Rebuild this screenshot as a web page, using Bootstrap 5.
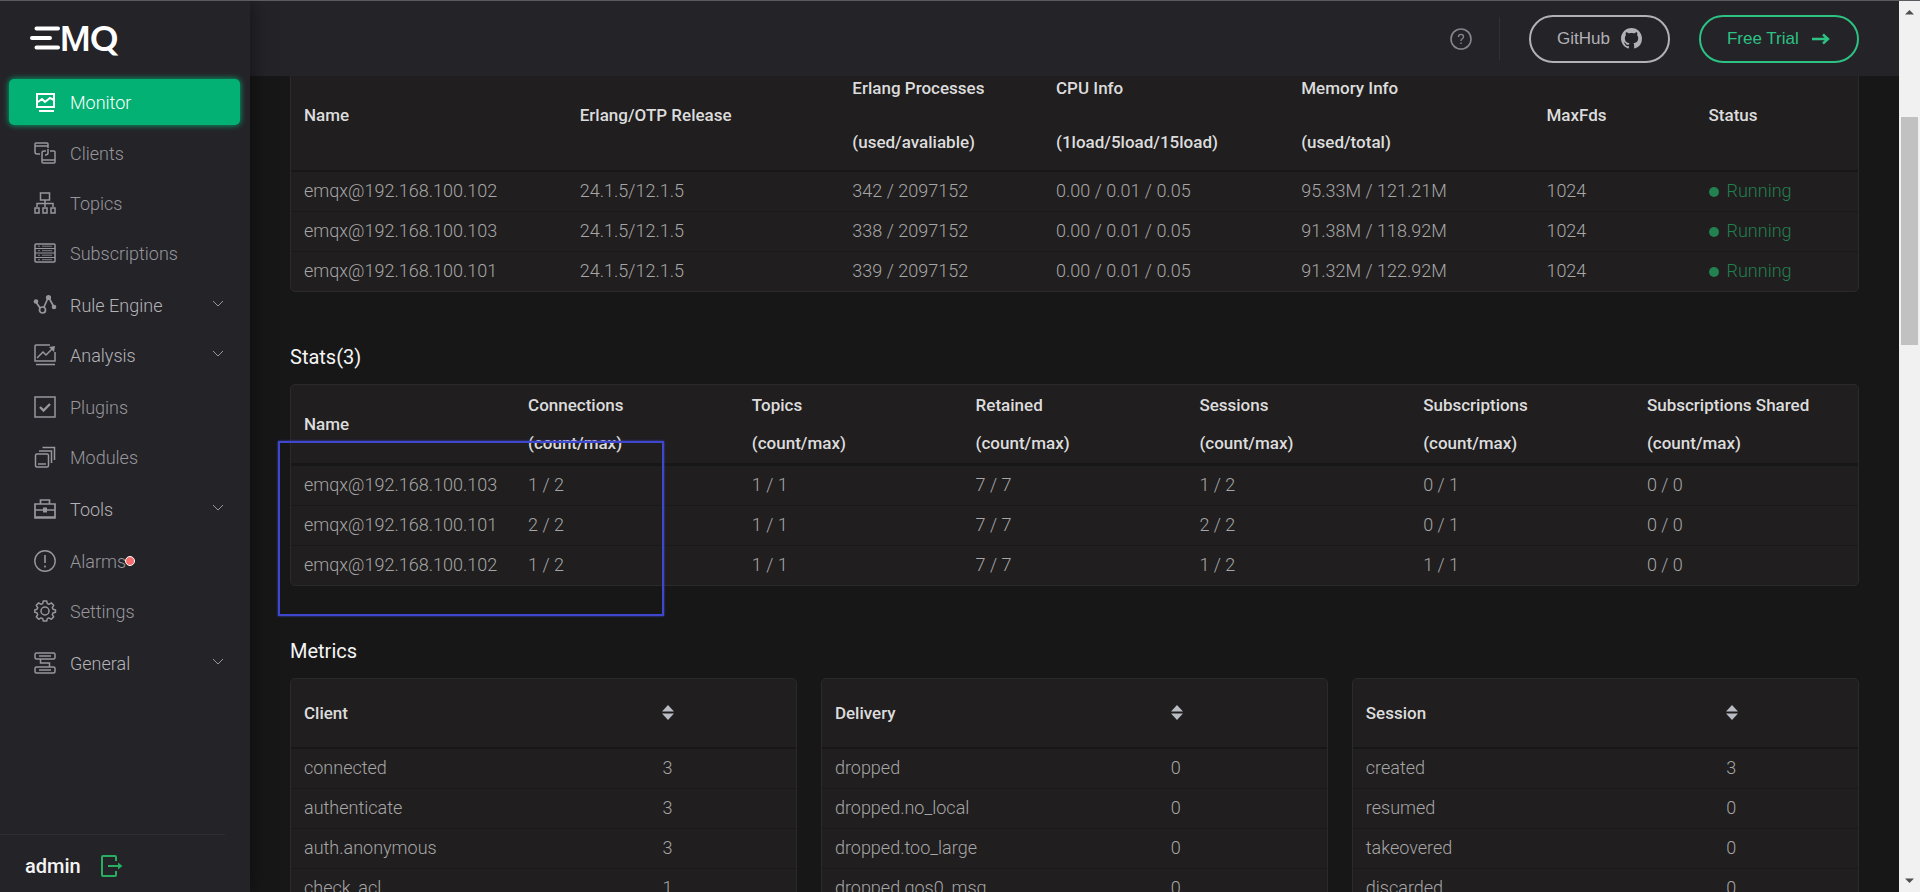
<!DOCTYPE html>
<html lang="en">
<head>
<meta charset="utf-8">
<meta name="viewport" content="width=device-width, initial-scale=1">
<title>EMQ Dashboard - Monitor</title>
<link rel="stylesheet" href="https://cdn.jsdelivr.net/npm/bootstrap@5.3.0/dist/css/bootstrap.min.css">
<style>
  :root {
    --panel: #242328;
    --page: #171717;
    --box: #201e1f;
    --line: #2a2a2b;
    --green: #02b173;
  }
  body {
    background: var(--page);
    color: #a6a6a6;
    font-family: Roboto, "Liberation Sans", sans-serif;
    font-size: 18px;
    font-weight: 300;
    border-top: 1px solid #5b5b60;
  }
  svg { fill: none; stroke: currentColor; flex: none; overflow: visible; }

  /* sidebar */
  .side { flex: none; width: 250px; background: var(--panel); box-shadow: 0 0 20px rgba(0, 0, 0, .5); z-index: 5; }
  .brand { height: 75px; padding: 19px 30px; color: #fff; }
  .brand text { fill: #fff; stroke: none; font-size: 35px; }
  .menu ul { margin: 0 0 2px; padding: 0; list-style: none; }
  .menu a { height: 50px; padding: 0 26px 0 34px; gap: 14px; color: #97979c; text-decoration: none; }
  .menu a.parent { color: #b4b4b8; }
  .menu a.parent svg { color: #97979c; }
  .menu a.current {
    height: 46px; margin: 3px 10px 3px 9px; padding-left: 25px;
    background: var(--green); color: #fff; border-radius: 5px; box-shadow: 0 0 6px var(--green);
  }
  .alarm-dot { width: 10px; height: 10px; margin-left: -15px; border-radius: 50%; background: #f56c6c; border: 1px solid #fff; }
  .account { height: 58px; margin-right: 25px; padding: 4px 0 0 25px; gap: 20px; border-top: 1px solid #2f2e33; }
  .account strong { color: #f4f4f4; font-size: 20px; font-weight: 500; }
  .account button { color: #27ae60; }

  /* top bar */
  .topbar { height: 75px; background: var(--panel); padding: 0 40px; z-index: 3; }
  .help { color: #85858c; }
  .divider { width: 1px; height: 43px; margin: 0 29px 0 27px; background: #313036; }
  .pill {
    height: 48px; border: 2px solid; border-radius: 24px; padding: 0 26px;
    font: 17px "Liberation Sans", Arial, sans-serif; text-decoration: none;
  }
  .pill-grey { color: #b1b1b6; gap: 11px; }
  .pill-green { color: #2dc183; gap: 12px; margin-left: 29px; padding-right: 27px; }

  /* content */
  .content { padding: 58px 40px 0; }
  h2 { margin: 53px 0 15px; font-size: 20px; line-height: 24px; font-weight: 400; color: #f5f5f5; }
  .box { background: var(--box); border: 1px solid var(--line); border-radius: 5px; }
  .grid-table { margin: 0; table-layout: fixed; border-collapse: separate; border-spacing: 0; --bs-table-bg: transparent; white-space: nowrap; }
  .grid-table > thead > tr > th { padding: 1px 13px; color: #dcdcdc; font-size: 17px; font-weight: 500; vertical-align: middle; border-bottom: 2px solid var(--page); }
  .grid-table > tbody > tr > td { padding: 0 13px; height: 40px; line-height: 37px; vertical-align: top; color: #a6a6a6; border-bottom: 1px solid #191919; }
  .grid-table > tbody > tr:last-child > td { height: 39px; border-bottom: 0; }
  .nodes th { line-height: 54px; }
  .stats > thead > tr > th { line-height: 38px; border-bottom-width: 3px; }
  .metric th { height: 70px; line-height: 24px; }
  .grid-table > tbody > tr > td.running { color: #23804f; }
  .dot { display: inline-block; width: 10px; height: 10px; margin-right: 8px; border-radius: 50%; background: #23804f; }
  .grid-table > thead > tr > th.sort { color: #b9bcc4; line-height: 0; padding-bottom: 3px; }
  .marker { left: -13px; top: 56px; width: 386px; height: 175px; border: 2px solid #3f48cc; box-shadow: 0 0 2px #3f48cc; pointer-events: none; }

  /* scroll rail */
  .rail { flex: none; width: 21px; background: #f1f1f1; padding: 8px 2px; color: #505050; }
  .thumb { height: 228px; margin-top: 102px; background: #c1c1c1; }
</style>
</head>
<body class="vh-100 overflow-hidden d-flex">

<aside class="side d-flex flex-column">
  <a class="brand d-block" href="#" aria-label="EMQ">
    <svg width="90" height="35" viewBox="0 0 90 35" stroke-width="4" stroke-linecap="round">
      <path d="M6.500 8.500H28M2 18H20M6.500 27.500H28"/>
      <text x="30" y="31" font-family="Roboto" font-weight="500">M</text>
      <text x="60" y="31" font-family="Lato" font-weight="700">Q</text>
    </svg>
  </a>

  <nav class="menu flex-grow-1">
    <ul>
      <li><a class="current d-flex align-items-center" href="#">
        <svg width="22" height="22" viewBox="0 0 22 22" stroke-width="2"><path d="M3 3h17v13H3zM5 20h15M4 11l4-3 3 3 5-4 4 2"/></svg>Monitor</a></li>
      <li><a class="d-flex align-items-center" href="#">
        <svg width="22" height="22" viewBox="0 0 22 22" stroke-width="1.500"><path d="M6 12H3q-2 0-2-2V2q0-1 1-1h11q1 0 1 1v4M1 4h13M16 9h4q1 0 1 1v10q0 1-1 1H9q-1 0-1-1V11q0-2 2-2h2M8 18h13M14 7v4q0 2-3 2"/></svg>Clients</a></li>
      <li><a class="d-flex align-items-center" href="#">
        <svg width="22" height="22" viewBox="0 0 22 22" stroke-width="1.500"><path d="M6.500 1h9v7h-9zM11 8v7M3 15v-3.500h16V15M1 16h4v5H1zM9 16h4v5H9zM17 16h4v5h-4z"/></svg>Topics</a></li>
      <li><a class="d-flex align-items-center" href="#">
        <svg width="22" height="22" viewBox="0 0 22 22" stroke-width="1.500"><rect x="1" y="2" width="20" height="18" rx="1"/><path d="M1 6.500h20M1 11h20M1 15.500h20" stroke-width="1.200"/><path d="M4 4.200h2m2 0h10M4 8.700h2m2 0h10M4 13.200h2m2 0h10M4 17.700h2m2 0h10" stroke-width=".8"/></svg>Subscriptions</a></li>
    </ul>
    <ul>
      <li><a class="parent d-flex align-items-center" href="#">
        <svg width="22" height="22" viewBox="0 0 22 22" stroke-width="1.700"><path d="M2 8l4 6M10 13l4-9M15 4l5 9"/><circle cx="8.500" cy="16" r="3"/><g fill="currentColor" stroke="none"><circle cx="2" cy="7.500" r="2.300"/><circle cx="14.500" cy="3.500" r="2.600"/><circle cx="20" cy="13" r="2.300"/></g></svg>Rule Engine
        <svg class="ms-auto" width="12" height="8" viewBox="0 0 12 8"><path d="M1 0l5 5 5-5"/></svg></a></li>
      <li><a class="parent d-flex align-items-center" href="#">
        <svg width="22" height="22" viewBox="0 0 22 22" stroke-width="1.500"><path d="M16 1H2q-1 0-1 1v15h20V8M2 20.500h19M3 14l6-6 3 3 7-7"/><path d="M15 3l6-1-1 6z" fill="currentColor" stroke="none"/></svg>Analysis
        <svg class="ms-auto" width="12" height="8" viewBox="0 0 12 8"><path d="M1 0l5 5 5-5"/></svg></a></li>
    </ul>
    <ul>
      <li><a class="d-flex align-items-center" href="#">
        <svg width="22" height="22" viewBox="0 0 22 22" stroke-width="1.500"><path d="M1 1h20v20H1z"/><path d="M6 11l3.500 3.500L16 8" stroke-width="2.400"/></svg>Plugins</a></li>
      <li><a class="d-flex align-items-center" href="#">
        <svg width="22" height="22" viewBox="0 0 22 22" stroke-width="1.500"><rect x="1.500" y="8" width="13" height="13" rx="1.500"/><path d="M5 5h12.500v12M8.500 1.500h12V14M4 18h8"/></svg>Modules</a></li>
    </ul>
    <ul>
      <li><a class="parent d-flex align-items-center" href="#">
        <svg width="22" height="22" viewBox="0 0 22 22" stroke-width="1.700"><path d="M1 6h20v14H1zM6.500 6V2h9v4M1 12h8m4 0h8M1 19h20"/><path d="M9 9.500h4v5H9z" fill="currentColor" stroke="none"/></svg>Tools
        <svg class="ms-auto" width="12" height="8" viewBox="0 0 12 8"><path d="M1 0l5 5 5-5"/></svg></a></li>
    </ul>
    <ul>
      <li><a class="d-flex align-items-center" href="#">
        <svg width="22" height="22" viewBox="0 0 22 22" stroke-width="1.400"><circle cx="11" cy="11" r="10.200"/><path d="M11 5v8M11 15.500v2" stroke-width="1.600"/></svg>Alarms<span class="alarm-dot"></span></a></li>
      <li><a class="d-flex align-items-center" href="#">
        <svg width="22" height="22" viewBox="0 0 22 22" stroke-width="1.500" stroke-linejoin="round"><circle cx="11" cy="11" r="4"/><path d="M9.300 1h3.400l.6 2.600 1.700.7 2.300-1.400 2.400 2.400-1.400 2.300.7 1.700 2.500.6v2.400l-2.500.6-.7 1.700 1.400 2.300-2.400 2.400-2.300-1.400-1.700.7-.6 2.400H9.300l-.6-2.400-1.700-.7-2.300 1.400-2.400-2.400 1.400-2.300-.7-1.700L.800 12.300V9.900L3 9.300l.7-1.700-1.400-2.300 2.400-2.400L7 4.300l1.700-.7z"/></svg>Settings</a></li>
    </ul>
    <ul>
      <li><a class="parent d-flex align-items-center" href="#">
        <svg width="22" height="22" viewBox="0 0 22 22" stroke-width="1.500"><rect x="1" y="1" width="20" height="6" rx="1.500"/><rect x="1" y="15" width="20" height="6" rx="1.500"/><path d="M5 4h12M5 18h12M6.500 7v4h9v4"/></svg>General
        <svg class="ms-auto" width="12" height="8" viewBox="0 0 12 8"><path d="M1 0l5 5 5-5"/></svg></a></li>
    </ul>
  </nav>

  <div class="account d-flex align-items-center">
    <strong>admin</strong>
    <button type="button" class="btn p-0 border-0 d-flex" aria-label="Log out">
      <svg width="22" height="22" viewBox="0 0 22 22" stroke-width="2"><path d="M15 6V2q0-1-1-1H2q-1 0-1 1v18q0 1 1 1h12q1 0 1-1v-4M7 11h12"/><path d="M17 7.500l4.500 3.500-4.500 3.500z" fill="currentColor" stroke="none"/></svg>
    </button>
  </div>
</aside>

<div class="flex-grow-1 position-relative overflow-hidden">
  <header class="topbar position-absolute top-0 start-0 end-0 d-flex align-items-center justify-content-end">
    <a class="help d-flex" href="#" aria-label="Help">
      <svg width="22" height="22" viewBox="0 0 22 22" stroke-width="1.600"><circle cx="11" cy="11" r="10"/><path d="M8.500 9q0-2.600 2.500-2.600T13.500 8.700Q13.500 10 12 11q-1 .7-1 2M11 14.500v1.600" stroke-width="1.400"/></svg>
    </a>
    <div class="divider"></div>
    <a class="pill pill-grey d-flex align-items-center" href="#">GitHub
      <svg width="21" height="21" viewBox="0 0 16 16"><path fill="currentColor" stroke="none" d="M8 0C3.580 0 0 3.580 0 8c0 3.540 2.290 6.530 5.470 7.590.4.070.55-.17.55-.38 0-.19-.01-.82-.01-1.490-2.010.37-2.530-.49-2.690-.94-.09-.23-.48-.94-.82-1.130-.28-.15-.68-.52-.01-.53.630-.01 1.080.58 1.230.82.720 1.210 1.870.87 2.330.66.070-.52.280-.87.510-1.070-1.780-.2-3.640-.89-3.640-3.950 0-.87.310-1.590.820-2.150-.08-.2-.36-1.020.08-2.120 0 0 .67-.21 2.200.82.640-.18 1.320-.27 2-.27s1.360.09 2 .27c1.530-1.040 2.200-.82 2.200-.82.440 1.100.160 1.920.080 2.120.510.560.820 1.270.820 2.150 0 3.070-1.870 3.750-3.650 3.950.290.250.540.730.540 1.480 0 1.070-.01 1.930-.01 2.200 0 .21.150.46.550.38A8.010 8.010 0 0 0 16 8c0-4.420-3.580-8-8-8z"/></svg>
    </a>
    <a class="pill pill-green d-flex align-items-center" href="#">Free Trial
      <svg width="19" height="12" viewBox="0 0 19 12" stroke-width="2.400"><path d="M1 6h16M12 1.500l5 4.500-5 4.500"/></svg>
    </a>
  </header>

  <main class="content">
    <div class="box">
      <table class="table grid-table nodes">
        <colgroup><col style="width:17.600%"><col style="width:17.400%"><col style="width:13%"><col style="width:15.650%"><col style="width:15.650%"><col style="width:10.350%"><col></colgroup>
        <thead><tr><th>Name</th><th>Erlang/OTP Release</th><th>Erlang Processes<br>(used/avaliable)</th><th>CPU Info<br>(1load/5load/15load)</th><th>Memory Info<br>(used/total)</th><th>MaxFds</th><th>Status</th></tr></thead>
        <tbody>
          <tr><td>emqx@192.168.100.102</td><td>24.1.5/12.1.5</td><td>342 / 2097152</td><td>0.00 / 0.01 / 0.05</td><td>95.33M / 121.21M</td><td>1024</td><td class="running"><span class="dot"></span>Running</td></tr>
          <tr><td>emqx@192.168.100.103</td><td>24.1.5/12.1.5</td><td>338 / 2097152</td><td>0.00 / 0.01 / 0.05</td><td>91.38M / 118.92M</td><td>1024</td><td class="running"><span class="dot"></span>Running</td></tr>
          <tr><td>emqx@192.168.100.101</td><td>24.1.5/12.1.5</td><td>339 / 2097152</td><td>0.00 / 0.01 / 0.05</td><td>91.32M / 122.92M</td><td>1024</td><td class="running"><span class="dot"></span>Running</td></tr>
        </tbody>
      </table>
    </div>

    <h2>Stats(3)</h2>
    <div class="box position-relative">
      <table class="table grid-table stats">
        <colgroup><col style="width:14.300%"><col><col><col><col><col><col></colgroup>
        <thead><tr><th>Name</th><th>Connections<br>(count/max)</th><th>Topics<br>(count/max)</th><th>Retained<br>(count/max)</th><th>Sessions<br>(count/max)</th><th>Subscriptions<br>(count/max)</th><th>Subscriptions Shared<br>(count/max)</th></tr></thead>
        <tbody>
          <tr><td>emqx@192.168.100.103</td><td>1 / 2</td><td>1 / 1</td><td>7 / 7</td><td>1 / 2</td><td>0 / 1</td><td>0 / 0</td></tr>
          <tr><td>emqx@192.168.100.101</td><td>2 / 2</td><td>1 / 1</td><td>7 / 7</td><td>2 / 2</td><td>0 / 1</td><td>0 / 0</td></tr>
          <tr><td>emqx@192.168.100.102</td><td>1 / 2</td><td>1 / 1</td><td>7 / 7</td><td>1 / 2</td><td>1 / 1</td><td>0 / 0</td></tr>
        </tbody>
      </table>
      <div class="marker position-absolute"></div>
    </div>

    <h2>Metrics</h2>
    <div class="row g-4 mt-0">
      <div class="col-4 mt-0"><div class="box">
        <table class="table grid-table metric">
          <colgroup><col style="width:71%"><col></colgroup>
          <thead><tr><th>Client</th><th class="sort"><svg width="12" height="15" viewBox="0 0 12 15"><path fill="currentColor" stroke="none" d="M0 6.500L6 0l6 6.500zM0 8.500h12L6 15z"/></svg></th></tr></thead>
          <tbody><tr><td>connected</td><td>3</td></tr><tr><td>authenticate</td><td>3</td></tr><tr><td>auth.anonymous</td><td>3</td></tr><tr><td>check_acl</td><td>1</td></tr></tbody>
        </table>
      </div></div>
      <div class="col-4 mt-0"><div class="box">
        <table class="table grid-table metric">
          <colgroup><col style="width:66.500%"><col></colgroup>
          <thead><tr><th>Delivery</th><th class="sort"><svg width="12" height="15" viewBox="0 0 12 15"><path fill="currentColor" stroke="none" d="M0 6.500L6 0l6 6.500zM0 8.500h12L6 15z"/></svg></th></tr></thead>
          <tbody><tr><td>dropped</td><td>0</td></tr><tr><td>dropped.no_local</td><td>0</td></tr><tr><td>dropped.too_large</td><td>0</td></tr><tr><td>dropped.qos0_msg</td><td>0</td></tr></tbody>
        </table>
      </div></div>
      <div class="col-4 mt-0"><div class="box">
        <table class="table grid-table metric">
          <colgroup><col style="width:71.400%"><col></colgroup>
          <thead><tr><th>Session</th><th class="sort"><svg width="12" height="15" viewBox="0 0 12 15"><path fill="currentColor" stroke="none" d="M0 6.500L6 0l6 6.500zM0 8.500h12L6 15z"/></svg></th></tr></thead>
          <tbody><tr><td>created</td><td>3</td></tr><tr><td>resumed</td><td>0</td></tr><tr><td>takeovered</td><td>0</td></tr><tr><td>discarded</td><td>0</td></tr></tbody>
        </table>
      </div></div>
    </div>
  </main>
</div>

<div class="rail d-flex flex-column justify-content-between" aria-hidden="true">
  <div>
    <svg class="d-block mx-auto" width="9" height="6" viewBox="0 0 9 6"><path fill="currentColor" stroke="none" d="M0 5.500h9L4.500 1z"/></svg>
    <div class="thumb"></div>
  </div>
  <svg class="d-block mx-auto" width="9" height="6" viewBox="0 0 9 6"><path fill="currentColor" stroke="none" d="M0 .5h9L4.500 5z"/></svg>
</div>

<script src="https://cdn.jsdelivr.net/npm/bootstrap@5.3.0/dist/js/bootstrap.bundle.min.js"></script>
</body>
</html>
